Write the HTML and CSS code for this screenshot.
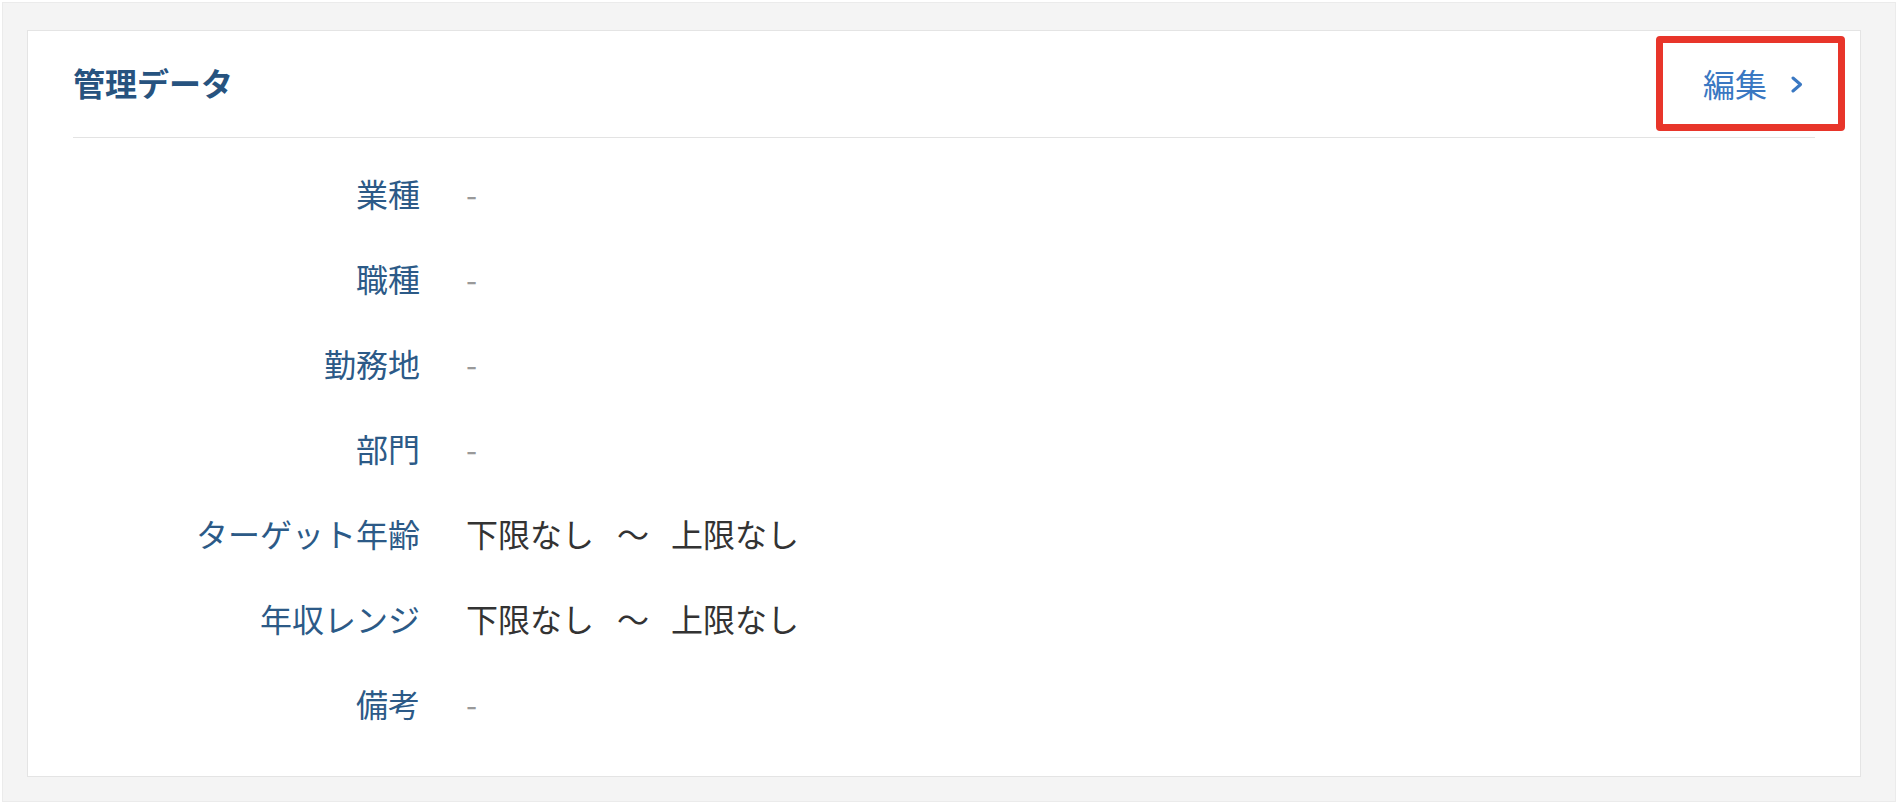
FILE: index.html
```html
<!DOCTYPE html>
<html lang="ja">
<head>
  <meta charset="UTF-8">
  <title>管理データ</title>
  <link rel="stylesheet" href="styles.css">
</head>
<body>

  <div class="page">
    <div class="card">
      <div class="card-header">
        <h2>管理データ</h2>
        <a class="edit-link" href="#">
          <span>編集</span>
          <svg class="chevron" width="12" height="17" viewBox="0 0 12 17">
            <path d="M2 2 L9.5 8.5 L2 15" fill="none" stroke="currentColor" stroke-width="3" stroke-linecap="round" stroke-linejoin="round"/>
          </svg>
        </a>
      </div>

      <div class="fields">
        <div class="label">業種</div>
        <div class="value empty">-</div>

        <div class="label">職種</div>
        <div class="value empty">-</div>

        <div class="label">勤務地</div>
        <div class="value empty">-</div>

        <div class="label">部門</div>
        <div class="value empty">-</div>

        <div class="label">ターゲット年齢</div>
        <div class="value"><span>下限なし</span><span class="tilde">〜</span><span>上限なし</span></div>

        <div class="label">年収レンジ</div>
        <div class="value"><span>下限なし</span><span class="tilde">〜</span><span>上限なし</span></div>

        <div class="label">備考</div>
        <div class="value empty">-</div>
      </div>
    </div>
  </div>

</body>
</html>
```

FILE: styles.css
```css
body {
  margin: 0;
  background-color: #fff;
  font-family: "Noto Sans CJK JP", "Noto Sans", sans-serif;
}

.page {
  margin: 2px 4px 4px 2px;
  height: 800px;
  box-sizing: border-box;
  background-color: #f4f4f4;
  border: 1px solid #ebebeb;
  padding: 27px 34px 24px 24px;
}

.card {
  background-color: #fff;
  border: 1px solid #e4e4e4;
  height: 100%;
  box-sizing: border-box;
  padding: 0 45px;
}

.card-header {
  display: flex;
  justify-content: space-between;
  align-items: center;
  height: 106px;
  border-bottom: 1px solid #e3e3e3;
}

h2 {
  margin: -4px 0 0;
  font-size: 32px;
  font-weight: bold;
  color: #27537f;
  line-height: 1;
}

.edit-link {
  display: flex;
  align-items: center;
  gap: 24px;
  box-sizing: border-box;
  height: 95px;
  margin-right: -30px;
  margin-top: -2px;
  padding: 0 35px 0 40px;
  border: 7px solid #e8352a;
  border-radius: 4px;
  color: #3a78c2;
  font-size: 32px;
  text-decoration: none;
  line-height: 1;
}

.chevron {
  display: block;
  margin-top: 2px;
}

.fields {
  display: grid;
  grid-template-columns: 347px 1fr;
  column-gap: 46px;
  padding-top: 13px;
  font-size: 32px;
  line-height: 85px;
}

.label {
  text-align: right;
  color: #2c5a87;
}

.value {
  color: #333;
}

.value.empty {
  color: #999;
}

.tilde {
  margin: 0 22px 0 23px;
}
```
